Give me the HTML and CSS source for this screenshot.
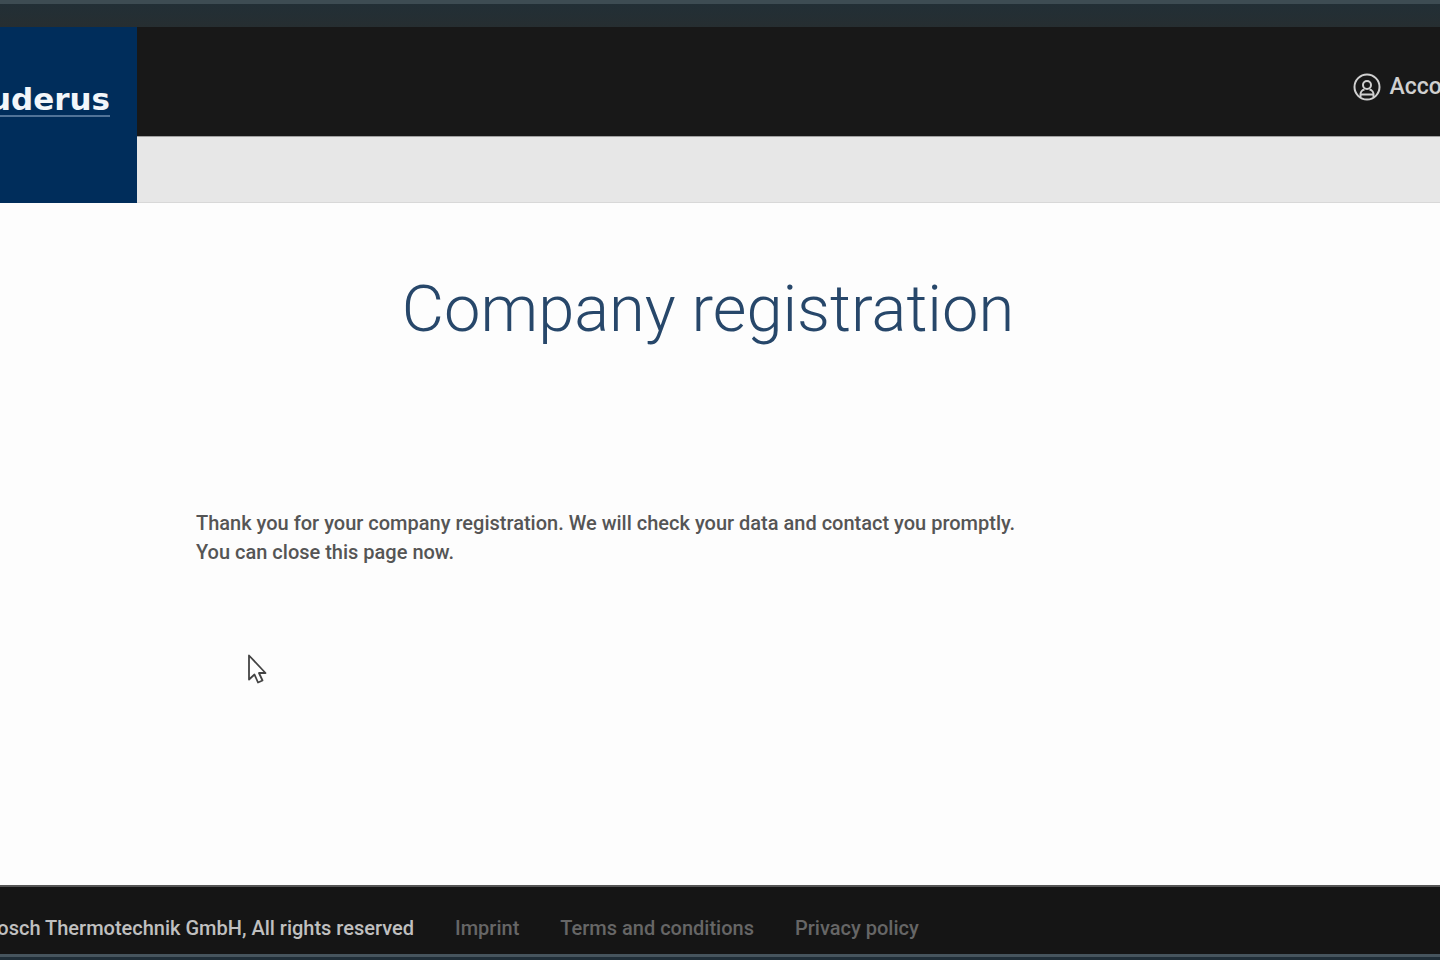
FILE: index.html
```
<!DOCTYPE html>
<html lang="en">
<head>
<meta charset="utf-8">
<title>Company registration</title>
<link rel="stylesheet" href="styles.css">
</head>
<body>
<div class="frame-top"></div>
<header class="header">
  <a class="brand" href="#"><span class="brand-name">Buderus</span></a>
  <div class="header-bars">
    <div class="topbar">
      <a class="account" href="#">
        <svg class="account-icon" viewBox="0 0 28 28" fill="none" stroke="currentColor" stroke-width="2" aria-hidden="true">
          <circle cx="14" cy="14" r="12.5"/>
          <circle cx="14" cy="12" r="4"/>
          <path d="M7.500 24v-2a5 5 0 0 1 4-5.500M20.500 24v-2a5 5 0 0 0-4-5.500M8 21.500h12"/>
        </svg>
        <span>Account</span>
      </a>
    </div>
    <nav class="navbar" aria-label="Main"></nav>
  </div>
</header>
<main class="main">
  <h1 class="title">Company registration</h1>
  <p class="message">Thank you for your company registration. We will check your data and contact you promptly.<br>You can close this page now.</p>
</main>
<footer class="footer">
  <div class="copyright"><span>Bosch Thermotechnik GmbH, All rights reserved</span></div>
  <nav class="footer-links" aria-label="Legal">
    <a href="#">Imprint</a>
    <a href="#">Terms and conditions</a>
    <a href="#">Privacy policy</a>
  </nav>
</footer>
<div class="frame-bottom"></div>
<svg class="cursor" viewBox="0 0 20 30" aria-hidden="true">
  <path d="M2 1.500v24l5.500-5 3.500 8 4.500-2-3.500-7.500h6.500z" fill="#fff" stroke="#444" stroke-width="1.800" stroke-linejoin="round"/>
</svg>
</body>
</html>
```
FILE: styles.css
```
* { box-sizing: border-box; }
body {
  margin: 0;
  min-height: 100vh;
  display: flex;
  flex-direction: column;
  overflow-x: hidden;
  background: #fdfdfd;
  color: #555;
  font-family: Roboto, "Liberation Sans", sans-serif;
  font-size: 20px;
  font-weight: 500;
}
a { color: inherit; text-decoration: none; }
.frame-top {
  height: 27px;
  border-top: 4px solid #3d4c53;
  background: linear-gradient(#222f36, #262e31);
}
.header { display: flex; }
.brand {
  width: 137px;
  padding: 56px 27px 0 0;
  display: flex;
  justify-content: flex-end;
  align-items: flex-start;
  overflow: hidden;
  background: #002d5b;
  color: #f2f6fa;
}
.brand-name {
  border-bottom: 2px solid #517398;
  font: bold 31px/32px "DejaVu Sans", sans-serif;
}
.header-bars { flex: 1; min-width: 0; }
.topbar {
  height: 109px;
  padding: 10px 0 0;
  display: flex;
  align-items: center;
  justify-content: flex-end;
  overflow: hidden;
  background: #181818;
}
.account {
  display: flex;
  align-items: center;
  gap: 8px;
  margin-right: -35px;
  color: #d0d0d0;
  font-size: 23px;
}
.account-icon { width: 28px; height: 28px; }
.navbar {
  height: 67px;
  border-top: 1px solid #a0a0a0;
  border-bottom: 1px solid #d8d8d8;
  background: #e7e7e7;
}
.main { flex: 1; padding: 66px 24px 64px 196px; }
.title {
  max-width: 1024px;
  margin: 0 0 160px;
  text-align: center;
  color: #27476a;
  font-size: 65px;
  font-weight: 300;
  line-height: 80px;
}
.message { margin: 0; line-height: 29px; }
.footer {
  height: 69px;
  padding-top: 14px;
  display: flex;
  align-items: center;
  gap: 41px;
  border-top: 2px solid #555;
  background: #151515;
}
.copyright {
  width: 414px;
  display: flex;
  justify-content: flex-end;
  overflow: hidden;
  white-space: nowrap;
  color: #c0c0c0;
}
.footer-links { display: flex; gap: 41px; color: #666; }
.frame-bottom { height: 6px; border-top: 3px solid #46545d; background: #202e38; }
.cursor { position: absolute; left: 247px; top: 654px; width: 20px; height: 30px; }
```
